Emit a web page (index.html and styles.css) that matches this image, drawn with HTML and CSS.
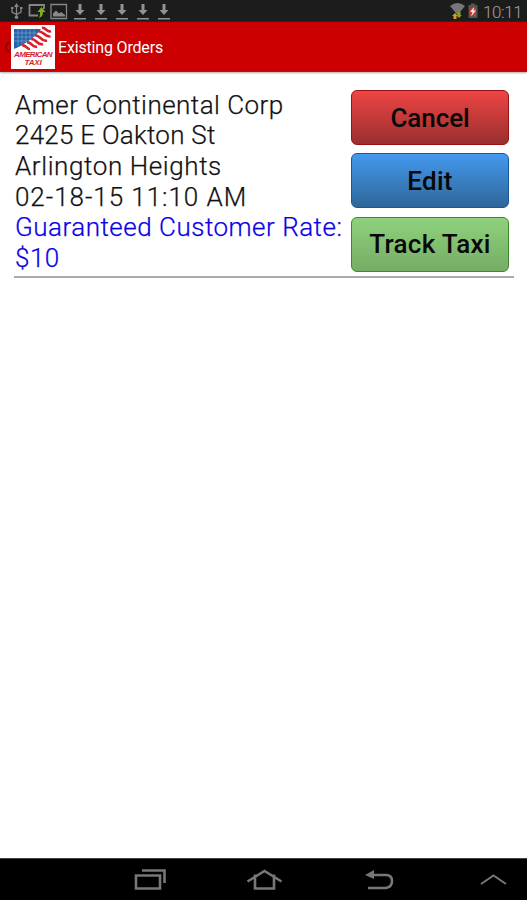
FILE: index.html
```html
<!DOCTYPE html>
<html lang="en">
<head>
<meta charset="utf-8">
<title>Existing Orders</title>
<link rel="stylesheet" href="styles.css">
</head>
<body>
<div class="status">
  <svg class="notifications" width="180" height="22" viewBox="0 0 180 22" fill="none" stroke="#858585" stroke-width="1.3">
    <defs><path id="download" d="M-1.500 4h3v6h3L0 15l-4.500-5h3zM-6 18H6v1.500H-6z" fill="#929292" stroke="none"/></defs>
    <path d="M16.500 5v12M12 8v4l4.500 2.500L21 12V8"/>
    <path d="M16.500 3l2.500 4h-5zM11 7h2.500v2H11zM20 7h2.500v2H20z" fill="#858585" stroke="none"/>
    <circle cx="16.500" cy="17.300" r="1.800" fill="#858585" stroke="none"/>
    <path d="M38 15.500h-8.500V5H44v4" stroke-width="1.800"/>
    <path d="M41.500 7l4 5H43c0 3-1 5-4 6 1-2 1-3.500 1-6h-2.500z" fill="#7daf17" stroke="none"/>
    <path d="M51 4.500h15.500v14H51z"/>
    <path d="M53 16.500v-3l3-3 3 3 2-1.500 4 3v1.500z" fill="#888" stroke="none"/>
    <use href="#download" x="80"/><use href="#download" x="101"/><use href="#download" x="122"/><use href="#download" x="143"/><use href="#download" x="164"/>
  </svg>
  <div class="system">
    <svg width="30" height="22" viewBox="0 0 30 22">
      <path d="M0 6q7.500-6 15 0l-7.500 9z" fill="#777"/>
      <path d="M5 13l3 3H6.500v3h-3v-3H2z" fill="#d99a20"/>
      <path d="M9 18l-3-3h1.500v-3h3v3H12z" fill="#78a51c"/>
      <path d="M18.500 5h2.500V3.500h4V5h2.500v13h-9z" fill="#555"/>
      <path d="M20 8h6v8h-6z" fill="#bd3d32"/>
      <path d="M24 7l-4 5h2.500L21 16.500l5-6h-2.500z" fill="#eee"/>
    </svg>
    <span class="clock">10:11</span>
  </div>
</div>
<header class="bar">
  <svg class="up" width="8" height="20" viewBox="0 0 8 20"><path d="M7 5Q3 7 3 10t4 5" fill="none" stroke="#8c0808" stroke-width="2"/></svg>
  <div class="logo">
    <svg class="flag" width="44" height="26" viewBox="0 0 44 26">
      <path d="M3 4h27C26 10 22 13 16 17 11 20 8 22 3 24z" fill="#2463aa"/>
      <path d="M3 8h23M3 12h19M3 16h14M7 4v17M11 4v15M15 4v13M19 4v10M23 4v7" stroke="#6f9bc9" stroke-width=".8"/>
      <g fill="none" stroke="#d9202b" stroke-width="2.600">
        <path d="M11 20.500c4-1 5 4 8 3.500"/>
        <path d="M16 17.500c5-1 5 6 10 4"/>
        <path d="M20 14c5-1 6 7 12 5"/>
        <path d="M24 10.500c5-1 7 7 12 5"/>
        <path d="M27.500 6.500c5-1 6 6 12 5"/>
        <path d="M31 3c4-1 5 5 9 3"/>
      </g>
    </svg>
    <div class="mark">AMERICAN</div>
    <div class="mark taxi">TAXI</div>
  </div>
  <h1>Existing Orders</h1>
</header>
<main>
  <section class="order">
    <div class="details">
      <div class="name">Amer Continental Corp</div>
      <div class="street">2425 E Oakton St</div>
      <div class="city">Arlington Heights</div>
      <div class="date">02-18-15 11:10 AM</div>
      <div class="rate">Guaranteed Customer Rate:</div>
      <div class="price">$10</div>
    </div>
    <div class="actions">
      <button class="cancel">Cancel</button>
      <button class="edit">Edit</button>
      <button class="track">Track Taxi</button>
    </div>
  </section>
</main>
<nav>
  <svg width="527" height="41" viewBox="0 0 527 41" fill="none" stroke="#777" stroke-width="2.600">
    <path d="M136 16.500h24v13h-24zM142 11.500h22.500V24"/>
    <path d="M255 15.500V29.500h19V15.500M247.500 22.500l17-10.500 17 10.500"/>
    <path d="M368 29h18q6-1 6-7t-6-6h-14"/>
    <path d="M365 16l9-5v9z" fill="#777" stroke="none"/>
    <path d="M481 25l12.500-8.500L506 25" stroke-width="2"/>
  </svg>
</nav>
</body>
</html>
```
FILE: styles.css
```css
* { box-sizing: border-box; }
body {
  margin: 0;
  height: 900px;
  display: flex;
  flex-direction: column;
  background: #fff;
  font-family: Roboto, sans-serif;
  overflow: hidden;
}
svg { display: block; flex: none; }
.status {
  height: 22px;
  flex: none;
  display: flex;
  justify-content: space-between;
  background: #1c1c1c;
}
.system { display: flex; padding-right: 5px; gap: 3px; }
.clock {
  width: 39px;
  font-size: 17px;
  line-height: 24px;
  color: #a0a0a0;
  font-weight: 300;
  letter-spacing: -.4px;
}
.bar {
  height: 50px;
  flex: none;
  display: flex;
  align-items: center;
  background: #c00;
  border-bottom: 1px solid #a51b1b;
  box-shadow: 0 1px 2px #aaa;
}
.up { margin-left: 3px; }
.logo {
  width: 44px;
  height: 44px;
  margin-top: 1px;
  flex: none;
  background: #fff;
}
.mark {
  font: italic bold 8px/8px "Liberation Sans", sans-serif;
  letter-spacing: -.65px;
  color: #d9202b;
  text-align: center;
}
.taxi { letter-spacing: -.2px; }
h1 {
  margin: 2px 0 0 3px;
  color: #fff;
  font-size: 16px;
  font-weight: 400;
  line-height: 20px;
  letter-spacing: -.17px;
}
main { flex: 1; padding: 17px 13px 0 14px; }
.order {
  height: 189px;
  display: flex;
  justify-content: space-between;
  border-bottom: 2px solid #aaa;
}
.details {
  padding: .5px 0 0 1px;
  font-size: 26px;
  line-height: 30.7px;
  color: #111;
  font-weight: 300;
  white-space: nowrap;
  -webkit-text-stroke: .25px currentColor;
}
.name { letter-spacing: .46px; }
.street { letter-spacing: .25px; }
.city { letter-spacing: .6px; }
.date { letter-spacing: .95px; }
.rate, .price { color: #0b00e8; letter-spacing: .5px; }
.actions {
  width: 158px;
  margin: 1px 5px 0 0;
  display: flex;
  flex-direction: column;
  gap: 8.300px;
  flex: none;
}
button {
  height: 55px;
  padding: 0;
  flex: none;
  border: 1.5px solid;
  border-radius: 6px;
  font: 500 26px Roboto, sans-serif;
  letter-spacing: .3px;
  color: #080808;
}
.cancel { background: linear-gradient(#ef4444, #992f2f); border-color: #991111; letter-spacing: -.1px; }
.edit { background: linear-gradient(#4499ee, #2f6699); border-color: #17589b; }
.track { background: linear-gradient(#8fd17c, #75ad65); border-color: #3c8a29; }
nav { height: 42px; flex: none; background: #000; border-top: 1px solid #444; }
```
